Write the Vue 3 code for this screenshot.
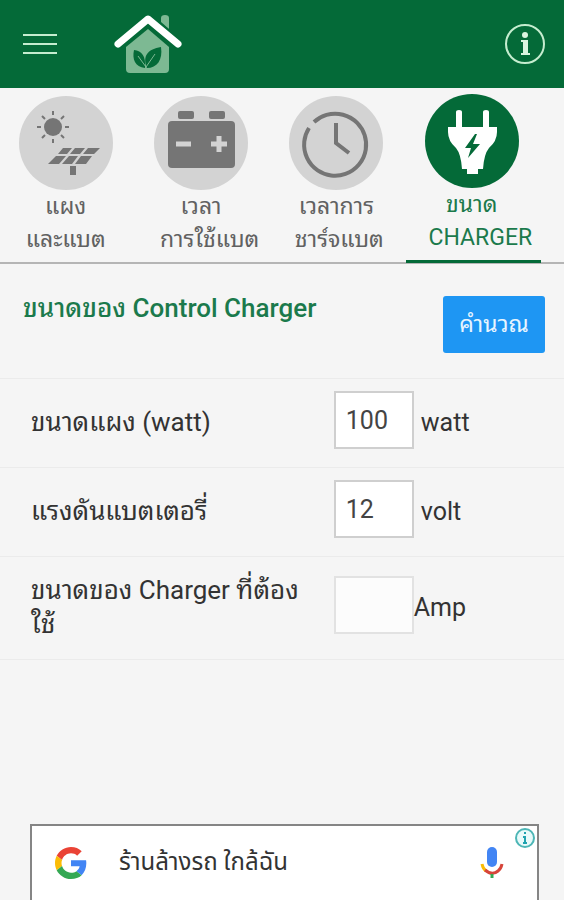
<template>
  <div class="page">
    <header class="app-header">
      <button class="icon-btn" aria-label="Menu">
        <svg width="34" height="24" viewBox="0 0 34 24">
          <path d="M0 3H34M0 12H34M0 21H34" stroke="#c5edcf" stroke-width="2" />
        </svg>
      </button>
      <svg class="logo" width="68" height="60" viewBox="0 0 68 60">
        <path d="M47 4Q47 1 51 1Q55 1 55 4V15L47 8Z" fill="#7db993" />
        <path d="M34 15L55 33V55Q55 59 51 59H16Q12 59 12 55V33Z" fill="#7db993" />
        <path d="M4 30L34 5L64 30" fill="none" stroke="#046a38" stroke-width="11" />
        <path d="M4 30L34 5L64 30" fill="none" stroke="#fff" stroke-width="7" stroke-linecap="round" stroke-linejoin="round" />
        <path d="M31 54C21 53 18 45 20 36C28 37 32 42 31 54ZM33 54C28 42 34 35 47 33C49 46 43 54 33 54Z" fill="#046a38" />
        <path d="M24 42L32 53L41 40" fill="none" stroke="#7db993" stroke-width="1" />
      </svg>
      <button class="icon-btn info" aria-label="Info">
        <svg width="42" height="42" viewBox="0 0 42 42">
          <circle cx="21" cy="21" r="19" fill="none" stroke="#c5edcf" stroke-width="2" />
          <circle cx="21" cy="12" r="3" fill="#d9f5df" />
          <path d="M17 17H24V30H26V32H17V30H19V19H17Z" fill="#d9f5df" />
        </svg>
      </button>
    </header>

    <nav class="tabs">
      <button
        v-for="tab in tabs"
        :key="tab.id"
        class="tab"
        :class="{ active: tab.id === current }"
        @click="current = tab.id"
      >
        <svg v-if="tab.id === 'panel'" class="tab-icon" viewBox="0 0 94 94">
          <circle class="disc" cx="47" cy="47" r="47" />
          <g class="shape">
            <circle cx="34" cy="31" r="9" />
            <path class="rays" d="M34 15V19M34 43V47M18 31H22M46 31H50M23 20L26 23M42 39L45 42M45 20L42 23M26 39L23 42" />
            <path d="M44 52H53L48 58H39ZM56 52H66L61 58H51ZM69 52H81L75 58H64ZM37 60H47L40 68H29ZM50 60H59L53 68H43ZM62 60H73L67 68H56Z" />
            <rect x="51" y="70" width="6" height="9" />
          </g>
        </svg>
        <svg v-else-if="tab.id === 'battery'" class="tab-icon" viewBox="0 0 94 94">
          <circle class="disc" cx="47" cy="47" r="47" />
          <g class="shape">
            <rect x="24" y="15" width="16" height="8" rx="2" />
            <rect x="55" y="15" width="16" height="8" rx="2" />
            <rect x="14" y="25" width="67" height="47" rx="4" />
          </g>
          <path d="M22 48H37M57 48H73M65 40V56" stroke="#d3d3d3" stroke-width="5" />
        </svg>
        <svg v-else-if="tab.id === 'clock'" class="tab-icon" viewBox="0 0 94 94">
          <circle class="disc" cx="47" cy="47" r="47" />
          <path d="M25 26A31 31 0 1 1 20 32M47 27V47L60 57" fill="none" stroke="#757575" stroke-width="4" />
        </svg>
        <svg v-else class="tab-icon" viewBox="0 0 94 94">
          <circle class="disc" cx="47" cy="47" r="47" />
          <path
            d="M31 18Q31 16 34 16Q37 16 37 18V33H58V18Q58 16 61 16Q64 16 64 18V33H72V38Q72 47 64 54Q59 60 58 75H53V80H42V75H37Q36 60 31 54Q23 47 23 38V33H31Z"
            fill="#fff"
          />
          <path d="M50 40L40 54H46L43 64L55 50H48L52 40Z" fill="#046a38" />
        </svg>
        <span class="tab-label">{{ tab.label }}</span>
      </button>
    </nav>

    <main>
      <section class="title-row">
        <h1>ขนาดของ Control Charger</h1>
        <button class="calc-btn" @click="calculate">คำนวณ</button>
      </section>

      <div class="field-row">
        <label for="watt">ขนาดแผง (watt)</label>
        <div class="value">
          <input id="watt" v-model="watt" type="text" inputmode="numeric" />
          <span class="unit spaced">watt</span>
        </div>
      </div>
      <div class="field-row">
        <label for="volt">แรงดันแบตเตอรี่</label>
        <div class="value">
          <input id="volt" v-model="volt" type="text" inputmode="numeric" />
          <span class="unit spaced">volt</span>
        </div>
      </div>
      <div class="field-row">
        <label for="amp">ขนาดของ Charger ที่ต้องใช้</label>
        <div class="value">
          <input id="amp" class="result" :value="amp" type="text" readonly />
          <span class="unit">Amp</span>
        </div>
      </div>
    </main>

    <a class="ad" href="#">
      <svg width="32" height="32" viewBox="0 0 48 48">
        <path fill="#ea4335" d="M24 9.5c3.54 0 6.71 1.22 9.21 3.6l6.85-6.85C35.9 2.38 30.47 0 24 0 14.62 0 6.51 5.38 2.56 13.22l7.98 6.19C12.43 13.72 17.74 9.5 24 9.5z" />
        <path fill="#4285f4" d="M46.98 24.55c0-1.57-.15-3.09-.38-4.55H24v9.02h12.94c-.58 2.96-2.26 5.48-4.78 7.18l7.73 6c4.51-4.18 7.09-10.36 7.09-17.65z" />
        <path fill="#fbbc05" d="M10.53 28.59c-.48-1.45-.76-2.99-.76-4.59s.27-3.14.76-4.59l-7.98-6.19C.92 16.46 0 20.12 0 24c0 3.88.92 7.54 2.56 10.78l7.97-6.19z" />
        <path fill="#34a853" d="M24 48c6.48 0 11.93-2.13 15.89-5.81l-7.73-6c-2.15 1.45-4.92 2.3-8.16 2.3-6.26 0-11.57-4.22-13.47-9.91l-7.98 6.19C6.51 42.62 14.62 48 24 48z" />
      </svg>
      <span class="ad-text">ร้านล้างรถ ใกล้ฉัน</span>
      <svg width="24" height="32" viewBox="0 0 24 32">
        <rect x="7" y="0" width="10" height="20" rx="5" fill="#4285f4" />
        <path d="M2 17Q3 22 6 24" fill="none" stroke="#fbbc05" stroke-width="3" />
        <path d="M5 23Q12 29 18 24Q21 22 22 17" fill="none" stroke="#d6453a" stroke-width="3" />
        <path d="M12 27V31" stroke="#34a853" stroke-width="3" />
      </svg>
      <svg class="ad-info" width="20" height="20" viewBox="0 0 20 20">
        <circle cx="10" cy="10" r="9" fill="#e8fafa" stroke="#4db6b6" stroke-width="2" />
        <path d="M10 4V6M8 9H10V15M8 15H12" fill="none" stroke="#1fa3b0" stroke-width="2" />
      </svg>
    </a>
  </div>
</template>

<script setup>
import { ref } from 'vue'

const tabs = [
  { id: 'panel', label: 'แผง\nและแบต' },
  { id: 'battery', label: 'เวลา\n\u00a0\u00a0\u00a0การใช้แบต' },
  { id: 'clock', label: 'เวลาการ\n\u00a0ชาร์จแบต' },
  { id: 'charger', label: 'ขนาด\n\u00a0\u00a0\u00a0CHARGER' }
]

const current = ref('charger')
const watt = ref('100')
const volt = ref('12')
const amp = ref('')

function calculate() {
  const result = Number(watt.value) / Number(volt.value)
  amp.value = Number.isFinite(result) ? result.toFixed(1) : ''
}
</script>

<style>
body {
  background: #f5f5f5;
}
</style>

<style scoped>
.page {
  display: flex;
  flex-direction: column;
  min-height: 100vh;
  background: #f5f5f5;
  color: #333;
  font-family: Roboto, "Noto Sans Thai Looped", "Noto Sans", sans-serif;
  font-size: 25px;
}

.page * {
  box-sizing: border-box;
}

button,
input {
  font-family: inherit;
}

.app-header {
  display: flex;
  align-items: center;
  height: 88px;
  padding: 0 18px 0 23px;
  background: #046a38;
}

.icon-btn {
  display: flex;
  padding: 0;
  border: none;
  background: none;
  cursor: pointer;
}

.logo {
  margin-left: 57px;
}

.info {
  margin-left: auto;
}

.tabs {
  display: flex;
  border-bottom: 2px solid #b5b5b5;
}

.tab {
  display: flex;
  flex: 0 0 24%;
  flex-direction: column;
  align-items: center;
  margin-bottom: -1px;
  padding: 8px 4px 4px 0;
  border: none;
  border-bottom: 3px solid transparent;
  background: none;
  color: #616161;
  cursor: pointer;
}

.tab.active {
  padding-top: 6px;
  padding-bottom: 6px;
  border-bottom-color: #046a38;
  color: #1b7a4c;
}

.tab-icon {
  width: 94px;
  height: 94px;
}

.disc {
  fill: #d3d3d3;
}

.active .disc {
  fill: #046a38;
}

.shape {
  fill: #757575;
}

.rays {
  stroke: #757575;
  stroke-width: 2;
}

.tab-label {
  font-size: 23px;
  line-height: 33px;
  text-align: center;
  white-space: pre;
}

.title-row {
  display: flex;
  align-items: flex-start;
  justify-content: space-between;
  padding: 32px 19px 25px 23px;
  border-bottom: 1px solid #ebebeb;
}

h1 {
  margin: 0;
  color: #1b7a4c;
  font-size: 26px;
  font-weight: 500;
  line-height: 25px;
}

.calc-btn {
  width: 102px;
  height: 57px;
  padding: 0 0 6px;
  border: none;
  border-radius: 3px;
  background: #1e96f3;
  color: #e8f5ff;
  font-size: 23px;
  cursor: pointer;
}

.field-row {
  display: grid;
  grid-template-columns: 54% 1fr;
  align-items: center;
  padding: 12px 0 18px 31px;
  border-bottom: 1px solid #ebebeb;
}

.field-row label {
  padding: 4px 15px 0 0;
  font-size: 26px;
  line-height: 34px;
}

.value {
  display: flex;
  align-items: center;
  margin-left: 15px;
}

.value input {
  width: 80px;
  height: 58px;
  padding: 0 10px;
  border: 2px solid #cfcfcf;
  background: #fff;
  color: #444;
  font-size: 25px;
}

.value .result {
  border-color: #e2e2e2;
  background: #fcfcfc;
}

.unit {
  padding-top: 4px;
}

.spaced {
  margin-left: 7px;
}

.ad {
  position: relative;
  display: flex;
  align-items: center;
  height: 76px;
  margin: auto 25px 0 30px;
  padding: 0 33px 0 23px;
  border: 2px solid #858585;
  border-bottom: none;
  background: #fff;
  color: #333;
  font-family: Roboto, "Noto Sans Thai", "Noto Sans", sans-serif;
  font-size: 24px;
  text-decoration: none;
}

.ad-text {
  flex: 1;
  margin-left: 32px;
}

.ad-info {
  position: absolute;
  top: 2px;
  right: 2px;
}
</style>
